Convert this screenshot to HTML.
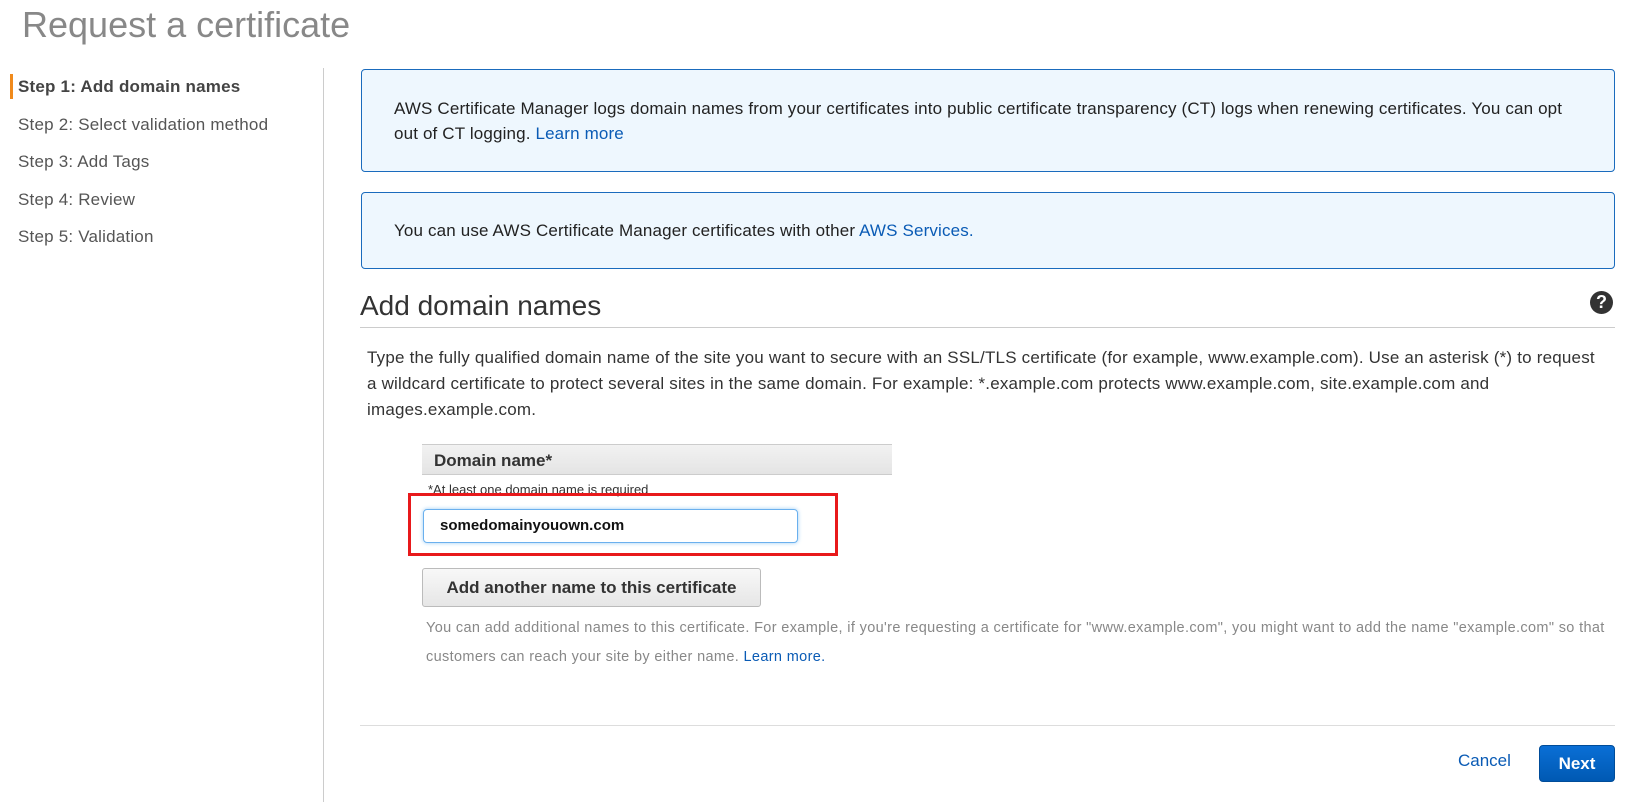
<!DOCTYPE html>
<html><head><style>
*{box-sizing:border-box;margin:0;padding:0}
body{width:1648px;height:802px;background:#fff;font-family:"Liberation Sans",Arial,sans-serif;color:#333;position:relative;overflow:hidden}
.a{position:absolute;white-space:nowrap}
a{color:#0a5bb5;text-decoration:none}
.step{position:absolute;left:18px;font-size:17px;color:#555;letter-spacing:0.2px}
.box{position:absolute;left:361px;width:1254px;border:1px solid #1a6bbd;border-radius:4px;background:#eef7fe;font-size:17px;color:#222;padding-left:32px;line-height:25px;white-space:nowrap;letter-spacing:0.15px}
</style></head><body>
<div class="a" style="left:22px;top:4px;font-size:36px;color:#888">Request a certificate</div>
<div class="a" style="left:10px;top:74px;width:3px;height:25px;background:#f08a1c"></div>
<div class="step" style="top:77px;font-weight:bold;color:#444">Step 1: Add domain names</div>
<div class="step" style="top:115px">Step 2: Select validation method</div>
<div class="step" style="top:152px">Step 3: Add Tags</div>
<div class="step" style="top:190px">Step 4: Review</div>
<div class="step" style="top:227px">Step 5: Validation</div>
<div class="a" style="left:323px;top:68px;width:1px;height:734px;background:#ccc"></div>
<div class="box" style="top:69px;height:103px;padding-top:26px">AWS Certificate Manager logs domain names from your certificates into public certificate transparency (CT) logs when renewing certificates. You can opt<br>out of CT logging. <a>Learn more</a></div>
<div class="box" style="top:192px;height:77px;padding-top:25px">You can use AWS Certificate Manager certificates with other <a>AWS Services.</a></div>
<div class="a" style="left:360px;top:290px;font-size:28px;color:#333">Add domain names</div>
<div class="a" style="left:1590px;top:291px;width:23px;height:23px;border-radius:50%;background:#333;color:#fff;font-weight:bold;font-size:18px;text-align:center;line-height:23px">?</div>
<div class="a" style="left:360px;top:327px;width:1255px;height:1px;background:#ccc"></div>
<div class="a" style="left:367px;top:345px;font-size:17px;line-height:26px;color:#333;letter-spacing:0.2px">Type the fully qualified domain name of the site you want to secure with an SSL/TLS certificate (for example, www.example.com). Use an asterisk (*) to request<br>a wildcard certificate to protect several sites in the same domain. For example: *.example.com protects www.example.com, site.example.com and<br>images.example.com.</div>
<div class="a" style="left:422px;top:444px;width:470px;height:31px;background:linear-gradient(#f2f2f2,#e4e4e4);border-top:1px solid #ccc;border-bottom:1px solid #ccc;font-weight:bold;font-size:17px;padding:6px 0 0 12px;color:#333">Domain name*</div>
<div class="a" style="left:428px;top:482px;font-size:13px;color:#333">*At least one domain name is required</div>
<div class="a" style="left:408px;top:493px;width:430px;height:63px;border:3px solid #e8191b"></div>
<div class="a" style="left:423px;top:509px;width:375px;height:34px;border:1px solid #6ab0ee;border-radius:4px;box-shadow:0 0 4px #9ccdf5;font-weight:bold;font-size:15px;padding:7px 0 0 16px;color:#111">somedomainyouown.com</div>
<div class="a" style="left:422px;top:568px;width:339px;height:39px;border:1px solid #bbb;border-radius:3px;background:linear-gradient(#f8f8f8,#e6e6e6);font-weight:bold;font-size:17px;text-align:center;line-height:37px;color:#333">Add another name to this certificate</div>
<div class="a" style="left:426px;top:614px;font-size:14.5px;line-height:29px;color:#888;letter-spacing:0.35px">You can add additional names to this certificate. For example, if you're requesting a certificate for "www.example.com", you might want to add the name "example.com" so that<br>customers can reach your site by either name. <a>Learn more.</a></div>
<div class="a" style="left:360px;top:725px;width:1255px;height:1px;background:#ddd"></div>
<div class="a" style="left:1458px;top:751px;font-size:17px;color:#0a5bb5">Cancel</div>
<div class="a" style="left:1539px;top:745px;width:76px;height:37px;border-radius:4px;background:linear-gradient(#0a6fd6,#0059b3);border:1px solid #004c99;color:#fff;font-weight:bold;font-size:17px;text-align:center;line-height:35px">Next</div>
</body></html>
